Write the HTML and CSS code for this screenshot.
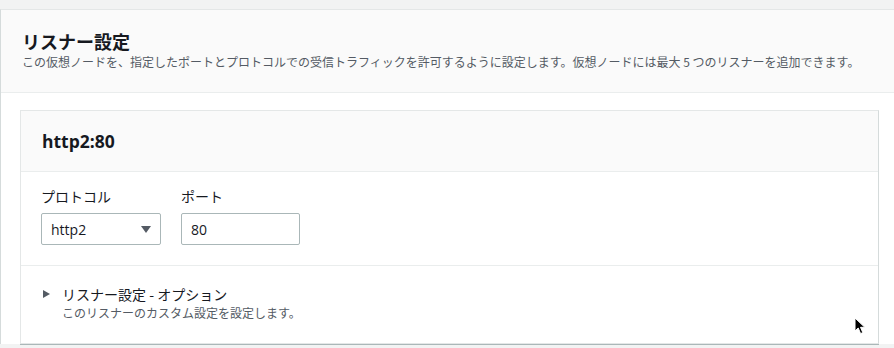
FILE: index.html
```html
<!DOCTYPE html>
<html lang="ja">
<head>
<meta charset="utf-8">
<link rel="stylesheet" href="styles.css">
</head>
<body>
<div class="page">
  <section class="panel">
    <header class="panel-head">
      <h2 class="panel-title">リスナー設定</h2>
      <p class="panel-desc">この仮想ノードを、指定したポートとプロトコルでの受信トラフィックを許可するように設定します。仮想ノードには最大 5 つのリスナーを追加できます。</p>
    </header>
    <div class="panel-body">
      <div class="card">
        <div class="card-head"><h3 class="card-title">http2:80</h3></div>
        <div class="card-fields">
          <div class="field">
            <label class="field-label">プロトコル</label>
            <div class="select"><span>http2</span><span class="caret"></span></div>
          </div>
          <div class="field">
            <label class="field-label">ポート</label>
            <div class="input">80</div>
          </div>
        </div>
        <div class="card-expand">
          <div class="expand-row"><span class="tri"></span><span class="expand-title">リスナー設定 - オプション</span></div>
          <div class="expand-desc">このリスナーのカスタム設定を設定します。</div>
        </div>
      </div>
    </div>
  </section>
  <svg class="cursor" width="14" height="18" viewBox="0 0 14 18"><path d="M1 1 L1 14 L4.2 11 L6.6 16.6 L8.8 15.6 L6.5 10.3 L10.8 10.3 Z" fill="#000" stroke="#fff" stroke-width="1"/></svg>
</div>
</body>
</html>
```
FILE: styles.css
```css
* { box-sizing: border-box; }
html, body { margin: 0; padding: 0; }
body {
  background: #f2f3f3;
  font-family: "Open Sans", "Noto Sans CJK JP", sans-serif;
  color: #16191f;
  width: 894px;
  height: 348px;
  overflow: hidden;
}
.page { position: relative; padding-top: 9px; }
.panel {
  background: #fff;
  border-top: 1px solid #e4e7e7;
  border-left: 1px solid #d5dbdb;
  margin-right: -10px;
}
.panel-head {
  background: #fafafa;
  border-bottom: 1px solid #eaeded;
  padding: 19px 19px 17px 21px;
  height: 83px;
}
.panel-title {
  margin: 0;
  font-family: "Noto Sans CJK JP", sans-serif;
  font-size: 18px;
  font-weight: 700;
  line-height: 24px;
  color: #16191f;
}
.panel-desc {
  margin: 0;
  font-family: "Noto Sans CJK JP", sans-serif;
  font-size: 12px;
  line-height: 18px;
  color: #545b64;
  white-space: nowrap;
}
.panel-body { padding: 17px 25px 0 19px; }
.card {
  border: 1px solid #e4e7e7;
  border-right-color: #d5dbdb;
  box-shadow: 0 1px 0 #aab7b8;
  background: #fff;
  width: 859px;
}
.card-head {
  background: #fafafa;
  border-bottom: 1px solid #eaeded;
  height: 61px;
  padding: 0 21px;
  display: flex;
  align-items: center;
}
.card-title {
  margin: 0;
  font-size: 17.5px;
  font-weight: 700;
  color: #16191f;
}
.card-fields {
  display: flex;
  gap: 20px;
  padding: 14px 20px 20px;
  border-bottom: 1px solid #eaeded;
}
.field { display: flex; flex-direction: column; }
.field-label {
  font-family: "Noto Sans CJK JP", sans-serif;
  font-size: 14px;
  line-height: 20px;
  color: #16191f;
  margin-bottom: 7px;
}
.select, .input {
  height: 32px;
  border: 1px solid #aab7b8;
  border-radius: 2px;
  font-size: 14px;
  color: #16191f;
  display: flex;
  align-items: center;
  padding: 0 9px;
}
.select { width: 120px; justify-content: space-between; padding-right: 9px; }
.input { width: 119px; }
.caret {
  width: 0; height: 0;
  border-left: 5px solid transparent;
  border-right: 5px solid transparent;
  border-top: 7px solid #545b64;
}
.card-expand { padding: 18px 20px 24px 22px; height: 77px; }
.expand-row { display: flex; align-items: center; }
.tri {
  width: 0; height: 0;
  border-top: 4.5px solid transparent;
  border-bottom: 4.5px solid transparent;
  border-left: 7px solid #545b64;
  margin-right: 12px;
}
.expand-title {
  font-family: "Noto Sans CJK JP", sans-serif;
  font-size: 14px;
  line-height: 20px;
  color: #16191f;
}
.expand-desc {
  font-family: "Noto Sans CJK JP", sans-serif;
  font-size: 12px;
  line-height: 17px;
  color: #545b64;
  padding-left: 19px;
}
.cursor { position: absolute; left: 854px; top: 317px; }
```
